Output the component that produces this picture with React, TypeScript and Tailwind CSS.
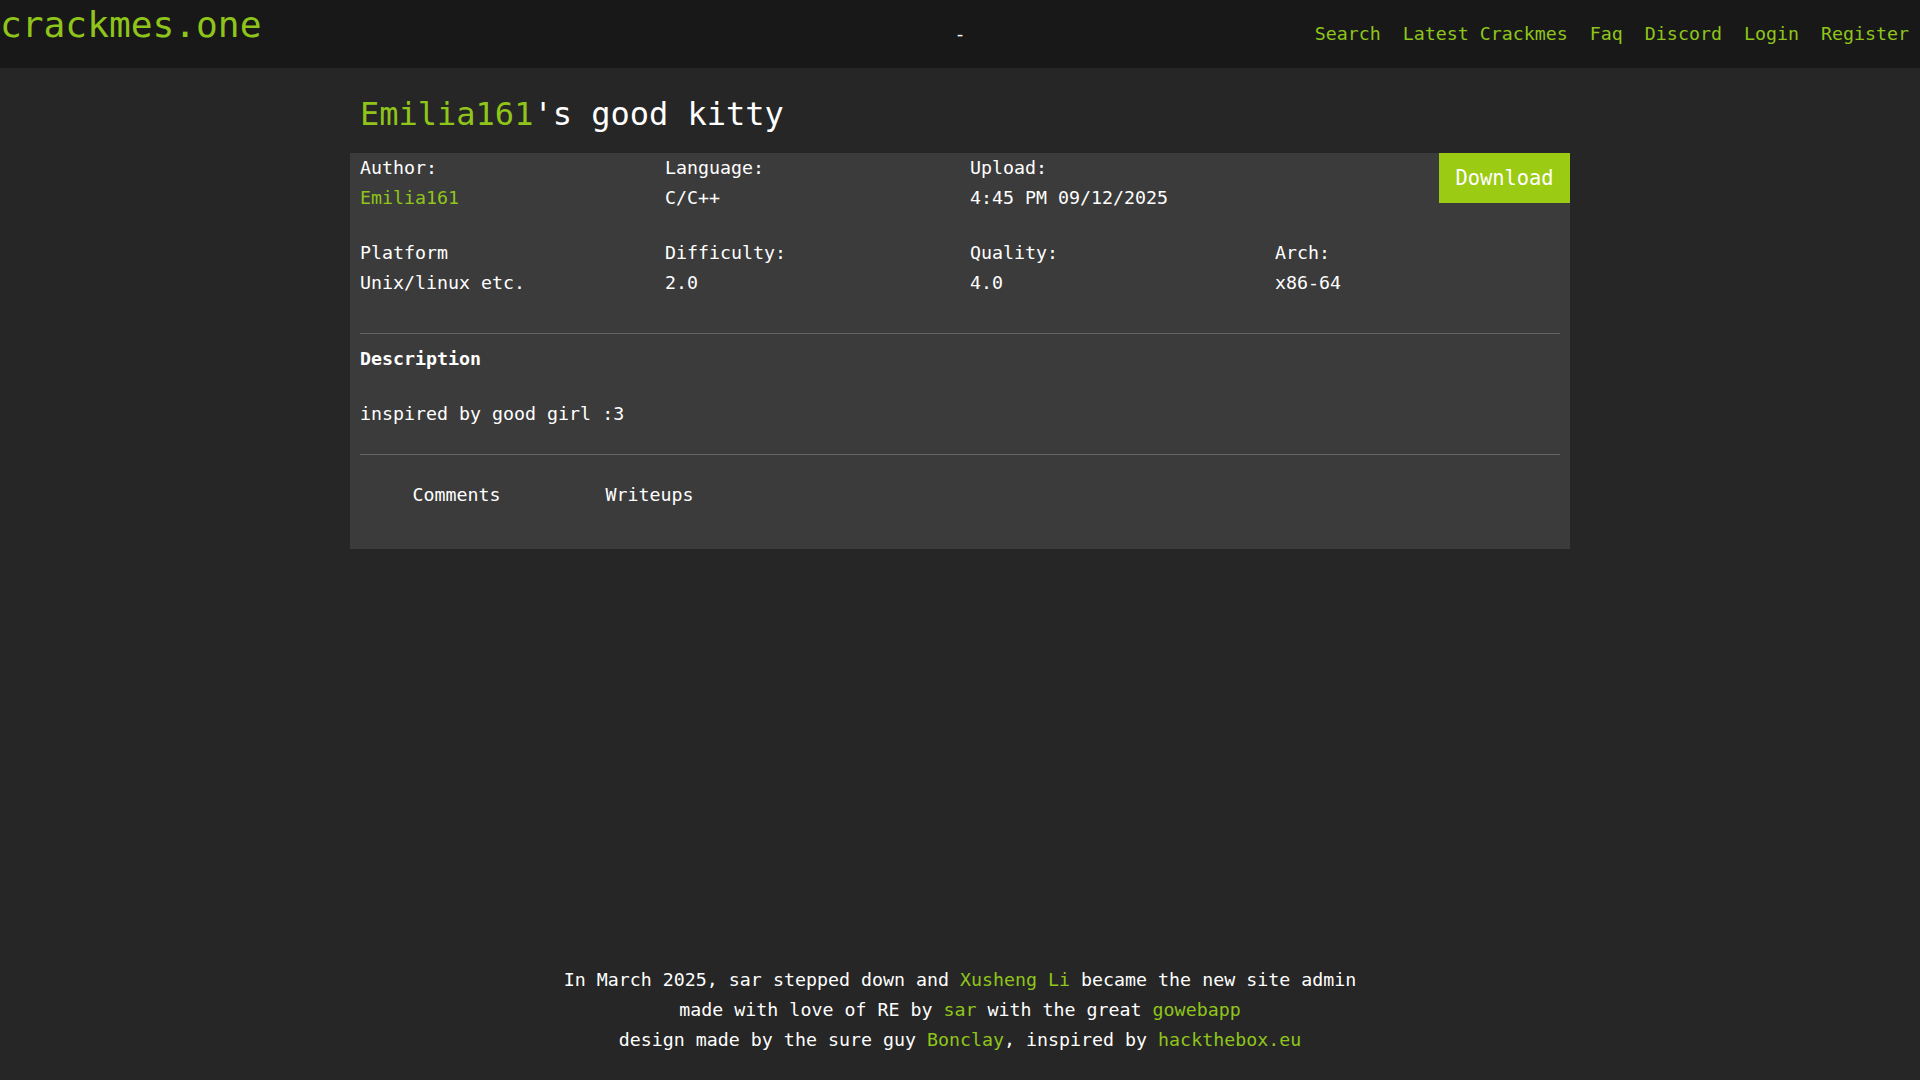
import React from "react";

const G = "text-[#8fc51a]";

function Field({ label, value, green }: { label: string; value: string; green?: boolean }) {
  return (
    <div className="pl-[10px] leading-[30px]">
      <div className="text-white">{label}</div>
      <div className={green ? G : "text-white"}>{value}</div>
    </div>
  );
}

export default function App() {
  return (
    <div className="min-h-screen flex flex-col bg-[#262626] font-['DejaVu_Sans_Mono',monospace] text-[18.3px] text-white">
      <header className="h-[68px] bg-[#181818] grid grid-cols-3">
        <div className={`pt-[5px] text-[36.2px] leading-[40px] ${G}`}>crackmes.one</div>
        <div className="pt-[19px] leading-[30px] text-center text-white">-</div>
        <nav className={`pt-[19px] leading-[30px] flex justify-end gap-[22px] pr-[11px] ${G}`}>
          <a>Search</a>
          <a>Latest Crackmes</a>
          <a>Faq</a>
          <a>Discord</a>
          <a>Login</a>
          <a>Register</a>
        </nav>
      </header>

      <main className="flex-1">
        <div className="w-[1220px] mx-auto">
          <h1 className="mt-[26px] pl-[10px] text-[32px] leading-[40px] text-white">
            <span className={G}>Emilia161</span>'s good kitty
          </h1>
          <div className="mt-[19px] bg-[#3b3b3b] pb-[39px]">
            <div className="grid grid-cols-4">
              <Field label="Author:" value="Emilia161" green />
              <Field label="Language:" value="C/C++" />
              <Field label="Upload:" value="4:45 PM 09/12/2025" />
              <div className="flex justify-end items-start">
                <button className="h-[50px] w-[131px] bg-[#9bcb13] text-white text-[20.4px] leading-none flex items-center justify-center">
                  Download
                </button>
              </div>
            </div>
            <div className="mt-[25px] grid grid-cols-4">
              <Field label="Platform" value="Unix/linux etc." />
              <Field label="Difficulty:" value="2.0" />
              <Field label="Quality:" value="4.0" />
              <Field label="Arch:" value="x86-64" />
            </div>
            <div className="mt-[35px] mx-[10px] h-px bg-[#646464]" />
            <div className="mt-[10px] pl-[10px] leading-[30px] font-bold">Description</div>
            <div className="mt-[25px] pl-[10px] leading-[30px]">inspired by good girl :3</div>
            <div className="mt-[25px] mx-[10px] h-px bg-[#646464]" />
            <div className="mt-[25px] pl-[10px] flex leading-[30px]">
              <div className="px-[52.5px]">Comments</div>
              <div className="px-[52.5px]">Writeups</div>
            </div>
          </div>
        </div>
      </main>

      <footer className="pb-[25px] text-center leading-[30px] text-white">
        <div>
          In March 2025, sar stepped down and <a className={G}>Xusheng Li</a> became the new site admin
        </div>
        <div>
          made with love of RE by <a className={G}>sar</a> with the great <a className={G}>gowebapp</a>
        </div>
        <div>
          design made by the sure guy <a className={G}>Bonclay</a>, inspired by <a className={G}>hackthebox.eu</a>
        </div>
      </footer>
    </div>
  );
}
